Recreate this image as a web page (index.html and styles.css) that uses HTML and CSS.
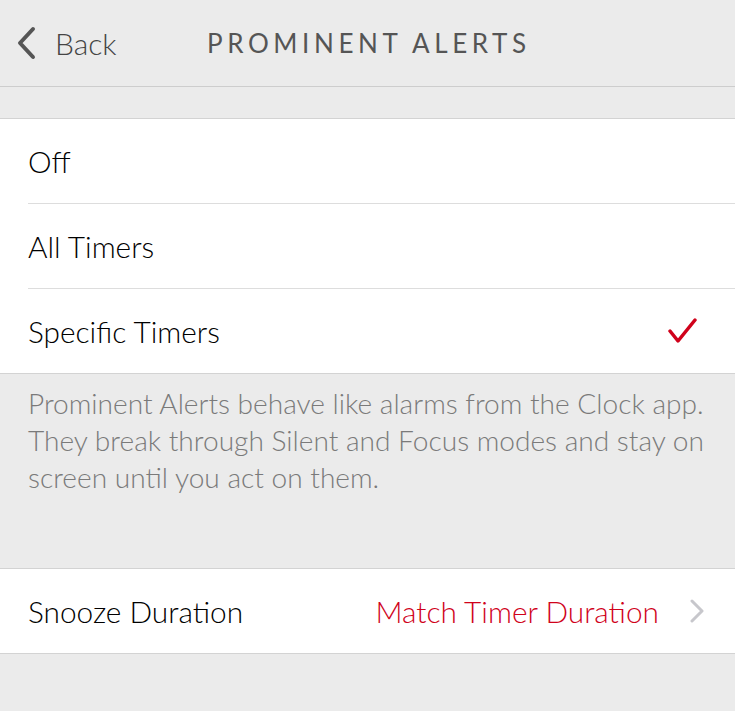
FILE: index.html
```html
<!DOCTYPE html>
<html lang="en">
<head>
    <meta charset="UTF-8">
    <meta name="viewport" content="width=device-width, initial-scale=1.0">
    <title>Prominent Alerts</title>
    <link rel="stylesheet" href="styles.css">
</head>
<body>
    <header class="navbar">
        <a class="back" href="#">
            <svg class="back-icon" width="22" height="34" viewBox="0 0 22 34">
                <path d="M18 3 L5 17 L18 31" fill="none" stroke="#555" stroke-width="4" stroke-linecap="round" stroke-linejoin="round"/>
            </svg>
            <span>Back</span>
        </a>
        <h1 class="title">PROMINENT ALERTS</h1>
    </header>

    <main>
        <div class="spacer"></div>
        <ul class="group">
            <li class="row">Off</li>
            <li class="row">All Timers</li>
            <li class="row selected">
                <span>Specific Timers</span>
                <!-- red check for the chosen option -->
                <svg class="check" width="30" height="28" viewBox="0 0 30 28">
                    <path d="M2 14 L10 24 L27 3" fill="none" stroke="#d0021b" stroke-width="3.5" stroke-linecap="round" stroke-linejoin="round"/>
                </svg>
            </li>
        </ul>
        <p class="note">Prominent Alerts behave like alarms from the Clock app. They break through Silent and Focus modes and stay on screen until you act on them.</p>

        <ul class="group">
            <li class="row">
                <span>Snooze Duration</span>
                <span class="value">Match Timer Duration</span>
                <svg class="chevron" width="16" height="24" viewBox="0 0 16 24">
                    <path d="M3 2 L13 12 L3 22" fill="none" stroke="#c7c7cc" stroke-width="3" stroke-linecap="round" stroke-linejoin="round"/>
                </svg>
            </li>
        </ul>
    </main>
</body>
</html>
```

FILE: styles.css
```css
body {
    margin: 0;
    padding: 0;
    background-color: #ebebeb;
    color: #000;
    font-family: Lato, "Open Sans", sans-serif;
    font-weight: 300;
    height: 711px;
    overflow: hidden;
}
.navbar {
    height: 86px;
    border-bottom: 1px solid #cdcdcd;
    display: flex;
    align-items: center;
    background-color: #ebebeb;
}
.back {
    display: flex;
    align-items: center;
    gap: 18px;
    padding-left: 15px;
    color: #444;
    text-decoration: none;
    font-size: 30px;
    width: 192px;
}
.back-icon {
    display: block;
}
.title {
    margin: 0;
    font-size: 26px;
    font-weight: 400;
    letter-spacing: 4.6px;
    color: #555;
}
.spacer {
    height: 31px;
    border-bottom: 1px solid #d3d3d3;
}
.group {
    list-style: none;
    margin: 0;
    padding: 0 0 0 28px;
    background-color: #fff;
    border-bottom: 1px solid #d3d3d3;
}
.row {
    box-sizing: border-box;
    height: 85px;
    display: flex;
    align-items: center;
    font-size: 29.8px;
    padding-right: 30px;
    border-bottom: 1px solid #dddddd;
}
.row:last-child {
    height: 84px;
    border-bottom: none;
}
.selected {
    justify-content: space-between;
    padding-right: 37px;
}
.note {
    margin: 0;
    padding: 11px 20px 0 28px;
    height: 183px;
    font-size: 28.1px;
    line-height: 37px;
    color: #7a7a7a;
    border-bottom: 1px solid #d3d3d3;
}
.value {
    margin-left: auto;
    color: #d0021b;
    margin-right: 30px;
}
.chevron {
    display: block;
}
```
